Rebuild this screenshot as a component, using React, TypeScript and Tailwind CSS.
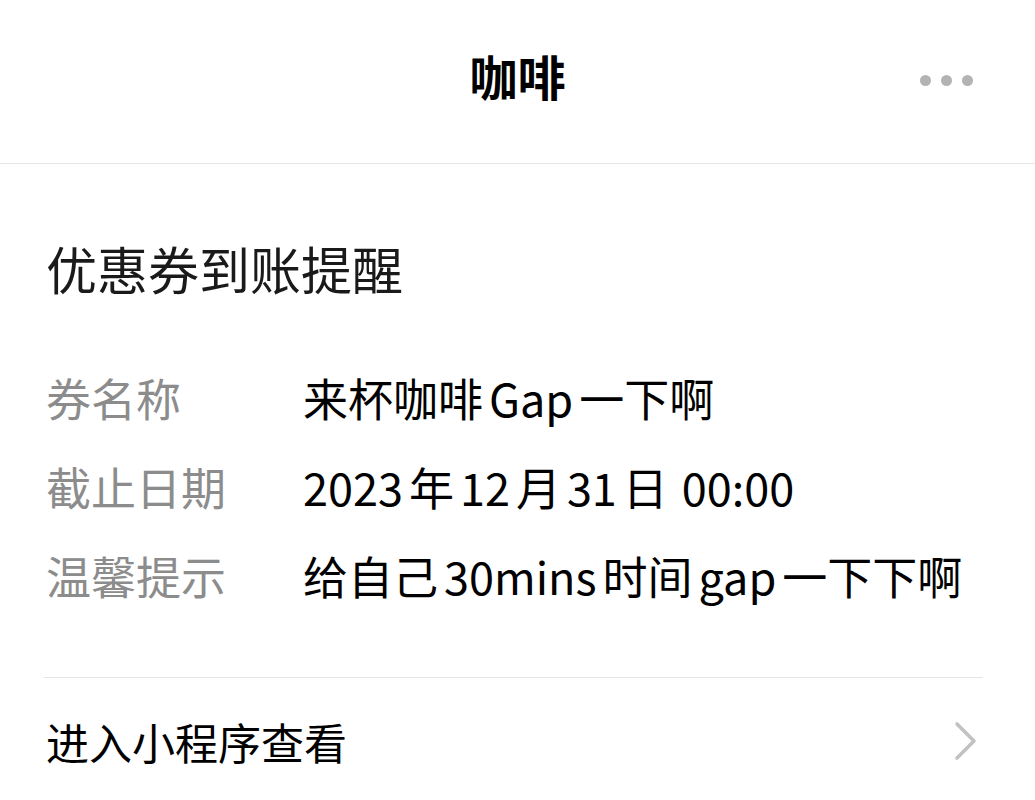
const ROWS = [
  { label: "券名称", value: ["来杯咖啡", "Gap", "一下啊"] },
  { label: "截止日期", value: ["2023", "年", "12", "月", "31", "日", "00:00"] },
  { label: "温馨提示", value: ["给自己", "30mins", "时间", "gap", "一下下啊"] },
];

export default function App() {
  return (
    <div
      className="w-[1035px] h-[800px] bg-white overflow-hidden"
      style={{ fontFamily: '"Noto Sans CJK SC", "Noto Sans", sans-serif' }}
    >
      {/* 顶栏 */}
      <div className="relative h-[164px] flex items-center justify-center border-b border-[#e5e5e5]">
        <h1 className="text-[48px] font-bold text-black leading-none -mt-[14px]">咖啡</h1>
        <div className="absolute right-[62px] top-[75px] flex gap-[10px]">
          <span className="w-[11px] h-[11px] rounded-full bg-[#b3b3b3]" />
          <span className="w-[11px] h-[11px] rounded-full bg-[#b3b3b3]" />
          <span className="w-[11px] h-[11px] rounded-full bg-[#b3b3b3]" />
        </div>
      </div>

      <div className="px-[46px]">
        <h2 className="pt-[78px] text-[51px] leading-[52px] text-[#1a1a1a]">优惠券到账提醒</h2>

        <div className="mt-[81px] flex flex-col gap-[44px]">
          {ROWS.map((row) => (
            <div key={row.label} className="flex items-center text-[45px] leading-[45px]">
              <span className="w-[257px] shrink-0 text-[#8c8c8c]">{row.label}</span>
              <span className="flex gap-[6px] text-black whitespace-nowrap">
                {row.value.map((seg, i) => (
                  <span key={i} className={i === 6 ? "ml-[8px]" : ""}>
                    {seg}
                  </span>
                ))}
              </span>
            </div>
          ))}
        </div>

        <div className="mt-[79px] border-t border-[#e5e5e5] mr-[6px] -ml-[2px]" />

        <div className="flex items-center justify-between h-[130px] pb-[4px]">
          <span className="text-[43px] text-black">进入小程序查看</span>
          <svg width="26" height="40" viewBox="0 0 26 40" fill="none" className="mr-[10px]">
            <path d="M4 3 L21 20 L4 37" stroke="#c2c2c2" strokeWidth="3.6" strokeLinecap="round" strokeLinejoin="round" />
          </svg>
        </div>
      </div>
    </div>
  );
}
